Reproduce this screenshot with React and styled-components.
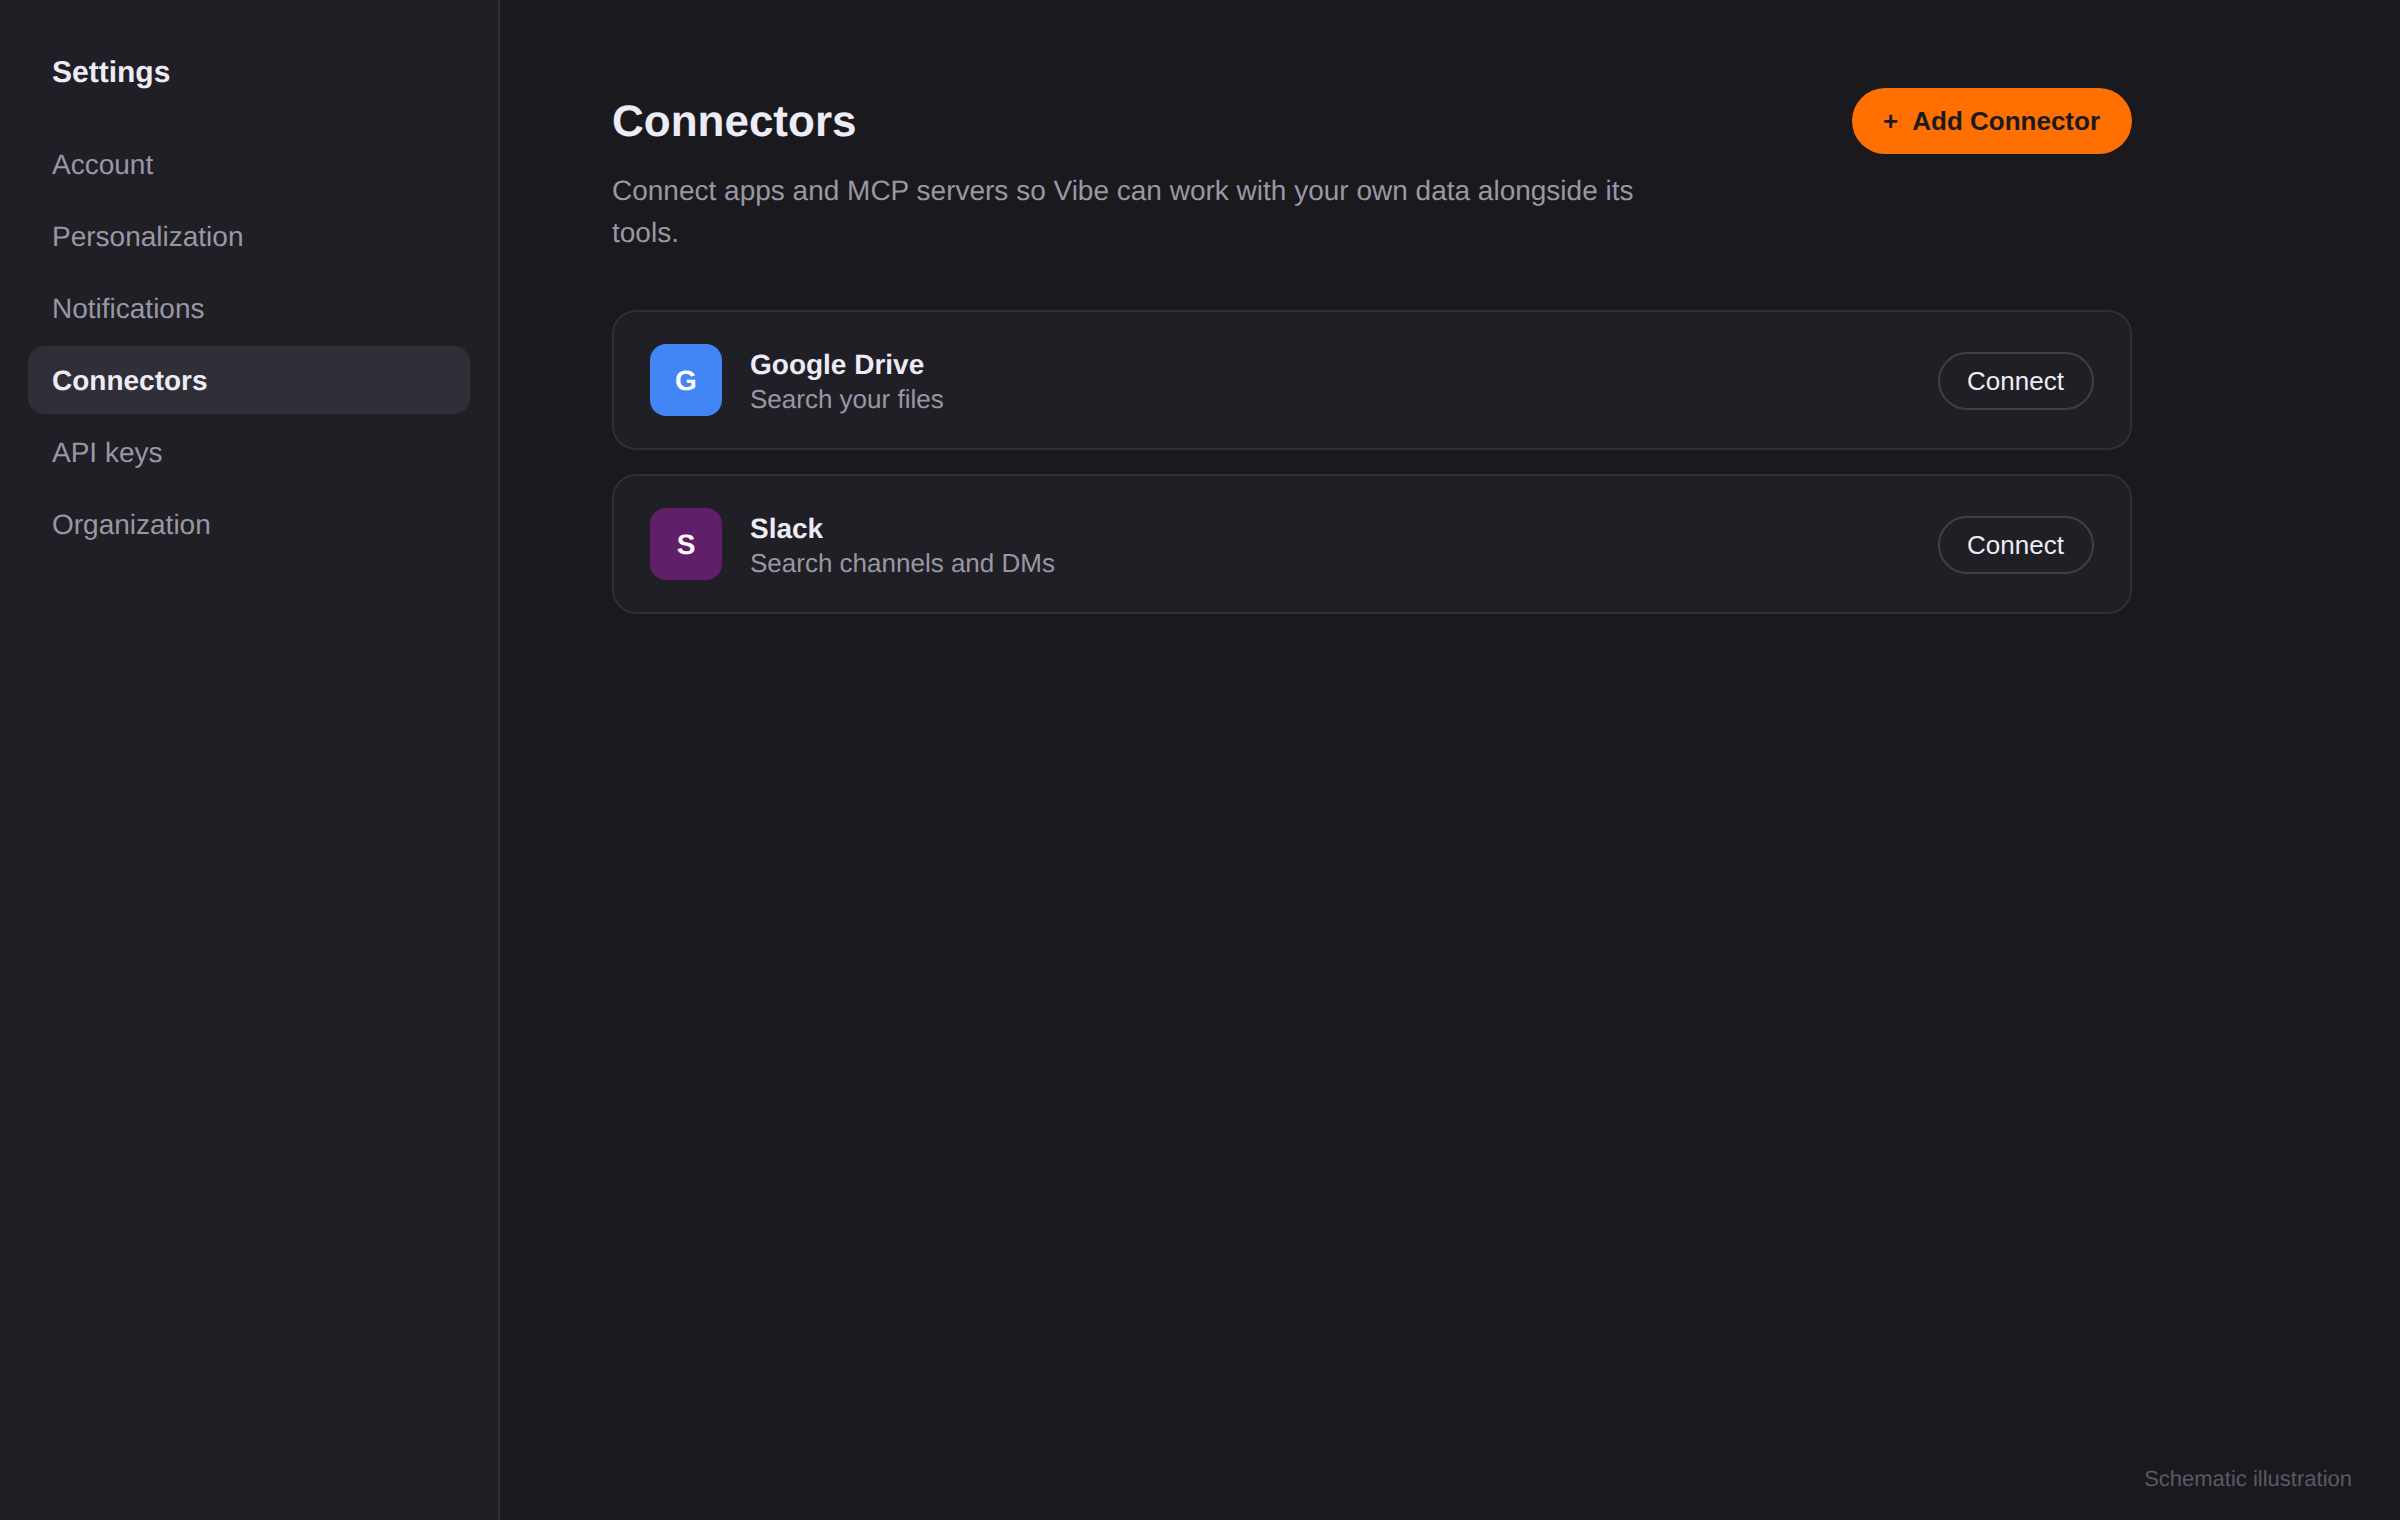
import React from "react";
import styled, { createGlobalStyle } from "styled-components";

const GlobalStyle = createGlobalStyle`
  * { box-sizing: border-box; }
  body {
    margin: 0;
    background: #1a191e;
    color: #edebf5;
    font-family: "Liberation Sans", Arial, sans-serif;
    text-rendering: geometricPrecision;
  }
`;

const Page = styled.div`
  display: flex;
  height: 100vh;
  overflow: hidden;
`;

const Sidebar = styled.aside`
  width: 500px;
  flex: none;
  padding: 56px 28px;
  background: #201f25;
  border-right: 2px solid #302e37;
`;

const SidebarTitle = styled.h2`
  margin: 0 0 40px;
  padding: 0 24px;
  font-size: 30px;
  font-weight: 700;
  line-height: 34px;
`;

const Nav = styled.nav`
  display: flex;
  flex-direction: column;
  gap: 4px;
`;

const NavItem = styled.a`
  padding: 19px 24px 17px;
  border-radius: 16px;
  font-size: 28px;
  line-height: 32px;
  color: ${(p) => (p.$active ? "#edebf5" : "#9a97a5")};
  font-weight: ${(p) => (p.$active ? 700 : 400)};
  background: ${(p) => (p.$active ? "#302e37" : "transparent")};
`;

const Main = styled.main`
  flex: 1;
  display: flex;
  flex-direction: column;
  padding: 88px 48px 28px 112px;
`;

const Content = styled.section`
  width: 1520px;
`;

const Header = styled.header`
  display: flex;
  align-items: center;
  justify-content: space-between;
  height: 66px;
`;

const Title = styled.h1`
  margin: 0;
  padding-top: 2px;
  font-size: 44px;
  font-weight: 700;
  line-height: 50px;
`;

const AddButton = styled.button`
  display: flex;
  align-items: center;
  justify-content: space-between;
  width: 280px;
  height: 66px;
  padding: 0 32px 0 31px;
  border: 0;
  border-radius: 33px;
  background: #ff7000;
  color: #1b1a1e;
  font: 700 26px/30px "Liberation Sans", Arial, sans-serif;
`;

const Description = styled.p`
  margin: 16px 0 56px;
  max-width: 1040px;
  font-size: 28px;
  line-height: 42px;
  color: #9a97a5;
`;

const CardList = styled.div`
  display: flex;
  flex-direction: column;
  gap: 24px;
`;

const Card = styled.article`
  display: flex;
  align-items: center;
  gap: 28px;
  height: 140px;
  padding: 0 36px;
  border: 2px solid #302e37;
  border-radius: 24px;
  background: #201f25;
`;

const Logo = styled.div`
  display: grid;
  place-items: center;
  width: 72px;
  height: 72px;
  padding-top: 2px;
  border-radius: 16px;
  background: ${(p) => p.$color};
  color: #fff;
  font-size: 28px;
  font-weight: 700;
  line-height: 32px;
`;

const CardText = styled.div`
  flex: 1;
  display: flex;
  flex-direction: column;
  gap: 3px;
  padding-top: 3px;
`;

const CardTitle = styled.div`
  font-size: 28px;
  font-weight: 700;
  line-height: 32px;
`;

const CardSubtitle = styled.div`
  font-size: 26px;
  line-height: 30px;
  color: #9a97a5;
`;

const ConnectButton = styled.button`
  width: 156px;
  height: 58px;
  margin-top: 2px;
  padding: 0 1px 0 0;
  border: 2px solid #403e49;
  border-radius: 29px;
  background: transparent;
  color: #edebf5;
  font: 400 26px/30px "Liberation Sans", Arial, sans-serif;
`;

const Footnote = styled.footer`
  margin-top: auto;
  text-align: right;
  font-size: 22px;
  line-height: 26px;
  color: #5b5966;
`;

const navItems = [
  "Account",
  "Personalization",
  "Notifications",
  "Connectors",
  "API keys",
  "Organization",
];

const connectors = [
  { name: "Google Drive", detail: "Search your files", letter: "G", color: "#4285f4" },
  { name: "Slack", detail: "Search channels and DMs", letter: "S", color: "#611f69" },
];

export default function App() {
  return (
    <Page>
      <GlobalStyle />
      <Sidebar>
        <SidebarTitle>Settings</SidebarTitle>
        <Nav>
          {navItems.map((item) => (
            <NavItem key={item} $active={item === "Connectors"}>
              {item}
            </NavItem>
          ))}
        </Nav>
      </Sidebar>
      <Main>
        <Content>
          <Header>
            <Title>Connectors</Title>
            <AddButton>
              <span>+</span>
              <span>Add Connector</span>
            </AddButton>
          </Header>
          <Description>
            Connect apps and MCP servers so Vibe can work with your own data alongside its tools.
          </Description>
          <CardList>
            {connectors.map((c) => (
              <Card key={c.name}>
                <Logo $color={c.color}>{c.letter}</Logo>
                <CardText>
                  <CardTitle>{c.name}</CardTitle>
                  <CardSubtitle>{c.detail}</CardSubtitle>
                </CardText>
                <ConnectButton>Connect</ConnectButton>
              </Card>
            ))}
          </CardList>
        </Content>
        <Footnote>Schematic illustration</Footnote>
      </Main>
    </Page>
  );
}
